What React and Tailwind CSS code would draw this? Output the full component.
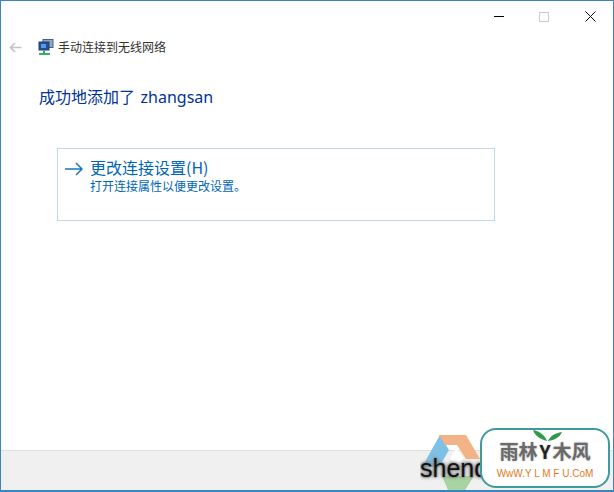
export default function App() {
  const cjk = { fontFamily: '"Noto Sans CJK SC", "Noto Sans", sans-serif' };
  return (
    <div className="relative w-[614px] h-[492px] overflow-hidden bg-white border border-[#3a85bd] border-b-2 flex flex-col" style={cjk}>
      <div className="h-[31px] flex justify-end shrink-0">
        <div className="w-[46px] flex items-center justify-center"><div className="w-[10px] h-px bg-black ml-[1px]" /></div>
        <div className="w-[46px] flex items-center justify-center"><div className="w-[10px] h-[10px] border border-[#cccccc]" /></div>
        <div className="w-[46px] flex items-center justify-center">
          <svg width="11" height="11" viewBox="0 0 11 11"><path d="M.5.5l10 10M10.5.5l-10 10" stroke="#111" fill="none" /></svg>
        </div>
      </div>
      <div className="h-[30px] flex items-center shrink-0 pl-[8px]">
        <svg width="13" height="11" viewBox="0 0 13 11" className="shrink-0"><path d="M12.5 5.5H1.5M6 1L1.5 5.5 6 10" stroke="#c4c4c4" strokeWidth="1.7" fill="none" /></svg>
        <svg width="16" height="16" viewBox="0 0 16 16" className="ml-[16px] shrink-0">
          <rect x="5" y="0.5" width="10" height="8" fill="#8fa9c9" stroke="#48607f" />
          <rect x="1" y="3" width="10" height="8" fill="#1d4f9e" stroke="#2a3f66" />
          <rect x="3" y="5" width="5" height="4" fill="#5a9be0" />
          <rect x="5" y="11" width="2" height="3" fill="#46a56a" />
          <rect x="1" y="14" width="11" height="2" fill="#35b26a" />
        </svg>
        <span className="ml-[4px] text-[12px] leading-none text-[#333333] whitespace-nowrap">手动连接到无线网络</span>
      </div>
      <div className="pl-[38px] pt-[24px] text-[16px] leading-[20px] text-[#003399] whitespace-nowrap shrink-0">
        成功地添加了 <span className="ml-[2px]" style={{ fontFamily: '"Noto Sans", sans-serif' }}>zhangsan</span>
      </div>
      <div className="ml-[56px] mt-[41px] w-[438px] h-[73px] border border-[#bfd9e8] flex pl-[7px] pt-[8px] shrink-0">
        <svg width="18" height="14" viewBox="0 0 18 14" className="mt-[5px] shrink-0"><path d="M0 7H17M11 1l6 6-6 6" stroke="#1a75bb" strokeWidth="1.5" fill="none" /></svg>
        <div className="ml-[7px] flex flex-col gap-[2px] text-[#0066b4]">
          <span className="text-[16px] leading-[20px] whitespace-nowrap">更改连接设置(H)</span>
          <span className="text-[12px] leading-[14px] whitespace-nowrap">打开连接属性以便更改设置。</span>
        </div>
      </div>
      <div className="flex-1" />
      <div className="h-[40px] bg-[#f0f0f0] border-t border-[#dfdfdf] shrink-0" />

      <div className="absolute left-[419px] top-[433px] w-[70px] h-[58px] overflow-hidden">
        <svg width="70" height="58" viewBox="0 0 70 58" className="absolute inset-0">
          <path d="M20 1L2 33h17L29 16z" fill="#7fc0e6" />
          <path d="M19 1h27l14 24H46L37 11H25z" fill="#f2b486" />
          <path d="M22 42h32l-9 14H28z" fill="#a8d3a2" />
          <path d="M36 14l8 10-8 8-6-8z" fill="#ffffff" />
        </svg>
        <span className="absolute left-0 top-[19px] text-[25px] leading-[30px] text-[#111111] whitespace-nowrap [text-shadow:0_0_2px_#777,0_0_3px_#777,0_0_4px_#888]" style={{ fontFamily: '"Liberation Sans", sans-serif' }}>shend</span>
      </div>
      <div className="absolute left-[479px] top-[427px] w-[130px] h-[60px] rounded-[16px] border-2 border-[#3f9a9e] bg-white flex flex-col items-center pt-[9px]">
        <div className="flex items-center text-[19px] leading-[24px] font-bold text-[#6a6a6a] [text-shadow:0_0_2px_#aaa]">
          <span>雨林</span><span className="text-[#222222] mx-[2px]">Y</span><span>木风</span>
        </div>
        <div className="mt-[5px] text-[10px] leading-[12px] text-[#e07b24] whitespace-nowrap" style={{ fontFamily: '"Liberation Sans", sans-serif' }}>WwW.Y L M F U.CoM</div>
        <svg width="32" height="14" viewBox="0 0 32 14" className="absolute left-[50px] -top-[2px]">
          <path d="M15 13C13 7 7 3 1 2c2 6 7 9 14 11z" fill="#2e9a4a" />
          <path d="M16 13c2-5 7-8 14-9-2 5-7 8-14 9z" fill="#2e9a4a" />
        </svg>
      </div>
    </div>
  );
}
